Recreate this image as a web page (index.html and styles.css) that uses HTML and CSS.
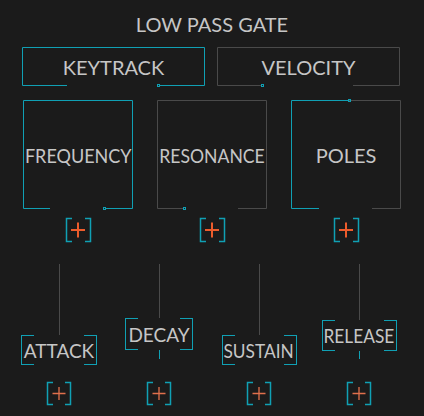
FILE: index.html
```html
<!DOCTYPE html>
<html lang="en">
<head>
<meta charset="UTF-8">
<title>Low Pass Gate</title>
<link rel="stylesheet" href="styles.css">
</head>
<body>

<div class="panel">
    <h1 class="title">LOW PASS GATE</h1>

    <!-- toggles -->
    <div class="row toggles">
        <div class="ctl wide">
            <svg class="outline" width="183" height="39" viewBox="0 0 183 39">
                <path class="on" d="M45 38.5H0.5V0.5H182.5V38.5H138"/>
                <rect class="mark" x="135.5" y="37.5" width="2" height="2"/>
            </svg>
            <span class="label">KEYTRACK</span>
        </div>
        <div class="ctl wide">
            <svg class="outline" width="183" height="39" viewBox="0 0 183 39">
                <path class="off" d="M45 38.5H0.5V0.5H182.5V38.5H136"/>
                <rect class="mark" x="44.5" y="37.5" width="2" height="2"/>
            </svg>
            <span class="label">VELOCITY</span>
        </div>
    </div>

    <!-- knobs -->
    <div class="row knobs">
        <div class="ctl knob">
            <svg class="outline" width="110" height="109" viewBox="0 0 110 109">
                <path class="on" d="M27 108.5H0.5V0.5H109.5V108.5H83"/>
                <rect class="mark" x="80.5" y="107.5" width="2" height="2"/>
            </svg>
            <span class="label squeeze">FREQUENCY</span>
        </div>
        <div class="ctl knob">
            <svg class="outline" width="110" height="109" viewBox="0 0 110 109">
                <path class="off" d="M27 108.5H0.5V0.5H109.5V108.5H81"/>
                <rect class="mark" x="26.5" y="107.5" width="2" height="2"/>
            </svg>
            <span class="label squeeze more">RESONANCE</span>
        </div>
        <div class="ctl knob">
            <svg class="outline" width="110" height="109" viewBox="0 0 110 109">
                <path class="on" d="M28 108.5H0.5V0.5H58"/>
                <path class="off" d="M58 0.5H109.5V108.5H81"/>
                <rect class="mark" x="57.5" y="-0.5" width="2" height="2"/>
            </svg>
            <span class="label">POLES</span>
        </div>
    </div>

    <div class="row adds">
        <div class="cell"><svg class="plus" width="27" height="26" viewBox="0 0 27 26"><path class="br" d="M7 1.5H1.5V24.5H7M20 1.5H25.5V24.5H20"/><path class="cross" d="M6 13H20M13 5.5V20.5"/></svg></div>
        <div class="cell"><svg class="plus" width="27" height="26" viewBox="0 0 27 26"><path class="br" d="M7 1.5H1.5V24.5H7M20 1.5H25.5V24.5H20"/><path class="cross" d="M6 13H20M13 5.5V20.5"/></svg></div>
        <div class="cell"><svg class="plus" width="27" height="26" viewBox="0 0 27 26"><path class="br" d="M7 1.5H1.5V24.5H7M20 1.5H25.5V24.5H20"/><path class="cross" d="M6 13H20M13 5.5V20.5"/></svg></div>
    </div>

    <!-- envelope sliders -->
    <div class="row sliders">
        <div class="slider">
            <div class="rail"></div>
            <div class="thumb" style="height:30px"><span>ATTACK</span></div>
            <div class="fill" style="height:0"></div>
        </div>
        <div class="slider">
            <div class="rail"></div>
            <div class="thumb" style="height:32px"><span>DECAY</span></div>
            <div class="fill" style="height:9px;margin-bottom:6px"></div>
        </div>
        <div class="slider">
            <div class="rail"></div>
            <div class="thumb fit" style="height:30px"><span>SUSTAIN</span></div>
            <div class="fill" style="height:0"></div>
        </div>
        <div class="slider">
            <div class="rail"></div>
            <div class="thumb fit" style="height:31px"><span>RELEASE</span></div>
            <div class="fill" style="height:8px;margin-bottom:6px"></div>
        </div>
    </div>

    <div class="row adds small">
        <div class="cell"><svg class="plus" width="26" height="25" viewBox="0 0 26 25"><path class="br" d="M7 1.5H1.5V23.5H7M19 1.5H24.5V23.5H19"/><path class="cross" d="M6.5 12.5H19.5M13 6V19"/></svg></div>
        <div class="cell"><svg class="plus" width="26" height="25" viewBox="0 0 26 25"><path class="br" d="M7 1.5H1.5V23.5H7M19 1.5H24.5V23.5H19"/><path class="cross" d="M6.5 12.5H19.5M13 6V19"/></svg></div>
        <div class="cell"><svg class="plus" width="26" height="25" viewBox="0 0 26 25"><path class="br" d="M7 1.5H1.5V23.5H7M19 1.5H24.5V23.5H19"/><path class="cross" d="M6.5 12.5H19.5M13 6V19"/></svg></div>
        <div class="cell"><svg class="plus" width="26" height="25" viewBox="0 0 26 25"><path class="br" d="M7 1.5H1.5V23.5H7M19 1.5H24.5V23.5H19"/><path class="cross" d="M6.5 12.5H19.5M13 6V19"/></svg></div>
    </div>
</div>

</body>
</html>
```

FILE: styles.css
```css
body {
    margin: 0;
    background: #1b1b1b;
    font-family: Lato, "Open Sans", sans-serif;
    color: #c6c6c6;
}
.panel {
    width: 424px;
    height: 416px;
    overflow: hidden;
}
.title {
    margin: 0;
    padding-top: 12px;
    font-size: 20px;
    font-weight: 400;
    line-height: 24px;
    text-align: center;
}
.row {
    display: flex;
}
.toggles {
    margin-top: 11px;
    padding-left: 22px;
    gap: 12px;
}
.ctl {
    position: relative;
    display: flex;
    align-items: center;
    justify-content: center;
    font-size: 20px;
}
.ctl .outline {
    position: absolute;
    left: 0;
    top: 0;
    overflow: visible;
}
.label {
    position: relative;
    white-space: nowrap;
}
/* long names get squeezed to fit the box, like fitted text */
.squeeze {
    transform: scaleX(0.9);
}
.squeeze.more {
    transform: scaleX(0.88);
}
.wide {
    width: 183px;
    height: 39px;
}
.knobs {
    margin-top: 14px;
    padding-left: 23px;
    gap: 24px;
}
.knob {
    width: 110px;
    height: 109px;
}
.outline path {
    fill: none;
    stroke-width: 1;
}
.on {
    stroke: #10a0b4;
}
.off {
    stroke: #4a4a4a;
}
.mark {
    fill: none;
    stroke: #10a0b4;
    stroke-width: 1;
}
.adds {
    margin-top: 8px;
    padding-left: 23px;
    gap: 24px;
}
.adds .cell {
    width: 110px;
    display: flex;
    justify-content: center;
}
.plus .br {
    fill: none;
    stroke: #10a0b4;
    stroke-width: 1.5;
}
.plus .cross {
    fill: none;
    stroke: #ee5c2c;
    stroke-width: 2;
}
.sliders {
    margin-top: 21px;
    padding-left: 9px;
}
.slider {
    width: 100px;
    height: 101px;
    display: flex;
    flex-direction: column;
    align-items: center;
}
.rail {
    flex: 1;
    width: 1px;
    background: #4a4a4a;
}
.fill {
    width: 1px;
    background: #10a0b4;
}
.thumb {
    position: relative;
    display: flex;
    align-items: center;
    justify-content: center;
    padding: 0 3px;
    font-size: 19px;
    white-space: nowrap;
}
.thumb.fit {
    box-sizing: border-box;
    width: 75px;
}
.thumb.fit span {
    transform: scaleX(0.91);
}
.thumb::before,
.thumb::after {
    content: "";
    position: absolute;
    top: 0;
    bottom: 0;
    width: 12px;
    border: 1.5px solid #10a0b4;
}
.thumb::before {
    left: 0;
    border-right: none;
}
.thumb::after {
    right: 0;
    border-left: none;
}
.adds.small {
    margin-top: 16px;
    padding-left: 9px;
    gap: 0;
}
.adds.small .cell {
    width: 100px;
}
.small .cross {
    stroke: #e0704c;
    stroke-width: 1.3;
}
```
